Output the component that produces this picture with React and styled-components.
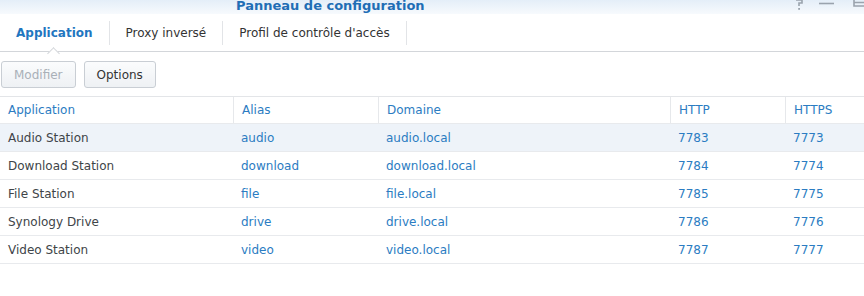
import React from 'react';
import styled, {createGlobalStyle} from 'styled-components';

const tabs = ['Application', 'Proxy inversé', "Profil de contrôle d'accès"]
const columns = ['Application', 'Alias', 'Domaine', 'HTTP', 'HTTPS']
const rows = [
    {app:'Audio Station', alias:'audio', domain:'audio.local', http:'7783', https:'7773'},
    {app:'Download Station', alias:'download', domain:'download.local', http:'7784', https:'7774'},
    {app:'File Station', alias:'file', domain:'file.local', http:'7785', https:'7775'},
    {app:'Synology Drive', alias:'drive', domain:'drive.local', http:'7786', https:'7776'},
    {app:'Video Station', alias:'video', domain:'video.local', http:'7787', https:'7777'},
]

export default function App(){
    return(
        <>
            <Global/>
            <Window>
                <TitleBar>
                    <Title>Panneau de configuration</Title>
                    <WinButtons>
                        <svg width="14" height="12" viewBox="0 0 14 12">
                            <path d="M4 0 H10 M10 0 V3 H7 V6" stroke="#9aa3ad" strokeWidth="1.6" fill="none"/>
                            <rect x="6.2" y="8" width="1.8" height="1.8" fill="#9aa3ad"/>
                        </svg>
                        <svg width="22" height="12" viewBox="0 0 22 12">
                            <path d="M1 3.5 H16" stroke="#9aa3ad" strokeWidth="1.6"/>
                        </svg>
                        <svg width="16" height="12" viewBox="0 0 16 12">
                            <path d="M2 0 V6 H16 M2 2.5 H16" stroke="#9aa3ad" strokeWidth="1.6" fill="none"/>
                        </svg>
                    </WinButtons>
                </TitleBar>

                <TabBar>
                    {tabs.map((t,i)=>(
                        <Tab key={t} active={i===0}>{t}</Tab>
                    ))}
                </TabBar>

                <Toolbar>
                    <Button disabled>Modifier</Button>
                    <Button>Options</Button>
                </Toolbar>

                <Table>
                    <HeaderRow>
                        {columns.map(c=>(
                            <HeaderCell key={c}>{c}</HeaderCell>
                        ))}
                    </HeaderRow>
                    {rows.map((r,i)=>(
                        <Row key={r.app} selected={i===0}>
                            <Cell>{r.app}</Cell>
                            <Cell link>{r.alias}</Cell>
                            <Cell link>{r.domain}</Cell>
                            <Cell link>{r.http}</Cell>
                            <Cell link>{r.https}</Cell>
                        </Row>
                    ))}
                </Table>
            </Window>
        </>
    )
}

//////////////////////////////////////////////STYLING COMPONENTS BELOW///////////////////////////////////////////

const Global = createGlobalStyle`
    html, body {
        margin:0;
        padding:0;
        background:#fff;
    }
    body {
        font-family:"DejaVu Sans", Verdana, sans-serif;
    }
`

const Window = styled.div`
    width:864px;
    height:296px;
    overflow:hidden;
    display:flex;
    flex-direction:column;
    background:#fff;
`

const TitleBar = styled.div`
    height:14px;
    display:flex;
    align-items:flex-end;
    justify-content:space-between;
    overflow:hidden;
    background:linear-gradient(#e4eef8, #f7fafd);
    padding-left:236px;
`

const Title = styled.div`
    font-size:13px;
    font-weight:bold;
    line-height:14px;
    color:#1f6eb5;
    margin-bottom:1px;
    white-space:nowrap;
`

const WinButtons = styled.div`
    display:flex;
    align-self:flex-start;
    gap:12px;
    margin-right:-4px;
    svg{display:block;}
`

const TabBar = styled.div`
    height:37px;
    display:flex;
    align-items:center;
    border-bottom:1px solid #d3d6da;
`

const Tab = styled.div`
    position:relative;
    height:24px;
    display:flex;
    align-items:center;
    padding:0 16px;
    border-right:1px solid #e2e4e7;
    font-size:12px;
    color:${p=>p.active ? '#1f76c0' : '#333'};
    font-weight:${p=>p.active ? 'bold' : 'normal'};
    &:after{
        content:'';
        display:${p=>p.active ? 'block' : 'none'};
        position:absolute;
        left:50%;
        bottom:-13px;
        width:8px;
        height:8px;
        margin-left:-5px;
        background:#fff;
        border-left:1px solid #d3d6da;
        border-top:1px solid #d3d6da;
        transform:rotate(45deg);
    }
`

const Toolbar = styled.div`
    display:flex;
    gap:8px;
    padding:9px 0 8px 1px;
`

const Button = styled.button`
    height:27px;
    padding:0 12px;
    border:1px solid #c9ced4;
    border-radius:3px;
    background:linear-gradient(#fbfcfd, #eef1f4);
    font-family:"DejaVu Sans", Verdana, sans-serif;
    font-size:12px;
    color:${p=>p.disabled ? '#a9b0b8' : '#333'};
`

const Table = styled.div`
    border-top:1px solid #e3e5e8;
    display:flex;
    flex-direction:column;
`

const grid = `
    display:grid;
    grid-template-columns:233px 145px 292px 115px 1fr;
`

const HeaderRow = styled.div`
    ${grid}
    height:26px;
`

const HeaderCell = styled.div`
    display:flex;
    align-items:center;
    padding-left:8px;
    font-size:12px;
    color:#2b7cc2;
    & + &{
        border-left:1px solid #e6e8eb;
    }
`

const Row = styled.div`
    ${grid}
    height:27px;
    border-top:1px solid #e8eaed;
    background:${p=>p.selected ? '#eef3f9' : '#fff'};
    &:last-child{
        border-bottom:1px solid #e8eaed;
    }
`

const Cell = styled.div`
    display:flex;
    align-items:center;
    padding-left:8px;
    font-size:12px;
    color:${p=>p.link ? '#2b7cc2' : '#404448'};
    white-space:nowrap;
`
